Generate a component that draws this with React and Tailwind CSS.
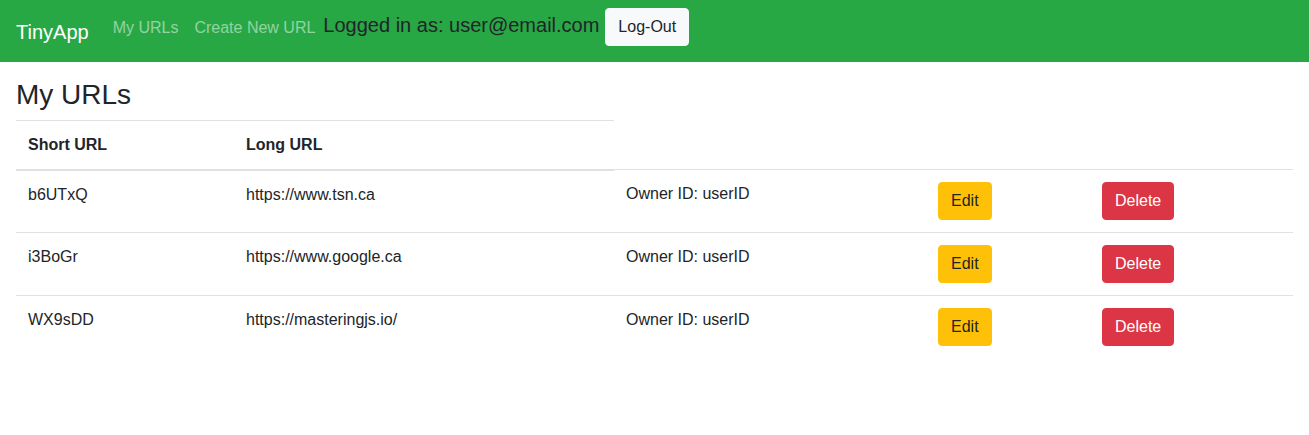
import React from 'react';

const urls = [
  { id: 'b6UTxQ', longURL: 'https://www.tsn.ca', owner: 'userID' },
  { id: 'i3BoGr', longURL: 'https://www.google.ca', owner: 'userID' },
  { id: 'WX9sDD', longURL: 'https://masteringjs.io/', owner: 'userID' },
];

export default function App() {
  return (
    <div className="min-h-[435px] bg-white text-[#212529] font-['Liberation_Sans',Arial,sans-serif] text-base leading-6">
      <nav className="h-[62px] bg-[#28a745] px-4 flex items-start pt-2">
        <a className="text-white text-xl leading-[30px] py-[5px] mr-4 mt-[4px]">TinyApp</a>
        <a className="text-white/50 px-2 py-2 mt-[0px]">My URLs</a>
        <a className="text-white/50 px-2 py-2 mt-[0px]">Create New URL</a>
        <span className="text-xl leading-[30px] mt-[2px] mr-[6px]">Logged in as: user@email.com</span>
        <button className="bg-[#f8f9fa] border border-[#f8f9fa] rounded px-3 py-[6px] leading-6 text-[#212529]">Log-Out</button>
      </nav>

      <div className="px-4 pt-4">
        <h3 className="text-[28px] leading-[1.2] mb-2">My URLs</h3>
        <table className="w-full table-fixed border-collapse">
          <colgroup>
            <col className="w-[218px]" />
            <col className="w-[380px]" />
            <col className="w-[312px]" />
            <col className="w-[164px]" />
            <col />
          </colgroup>
          <thead>
            <tr>
              {['Short URL', 'Long URL'].map(h => (
                <th key={h} className="text-left font-bold p-3 align-bottom border-t border-b-2 border-[#dee2e6]">{h}</th>
              ))}
            </tr>
          </thead>
          <tbody>
            {urls.map(u => (
              <tr key={u.id}>
                <td className="p-3 align-top border-t border-[#dee2e6]">{u.id}</td>
                <td className="p-3 align-top border-t border-[#dee2e6]">{u.longURL}</td>
                <td className="p-3 align-top border-t border-[#dee2e6]">Owner ID: {u.owner}</td>
                <td className="p-3 align-top border-t border-[#dee2e6]">
                  <button className="bg-[#ffc107] border border-[#ffc107] rounded px-3 py-[6px] leading-6 text-[#212529]">Edit</button>
                </td>
                <td className="p-3 align-top border-t border-[#dee2e6]">
                  <button className="bg-[#dc3545] border border-[#dc3545] rounded px-3 py-[6px] leading-6 text-white">Delete</button>
                </td>
              </tr>
            ))}
          </tbody>
        </table>
      </div>
    </div>
  );
}
